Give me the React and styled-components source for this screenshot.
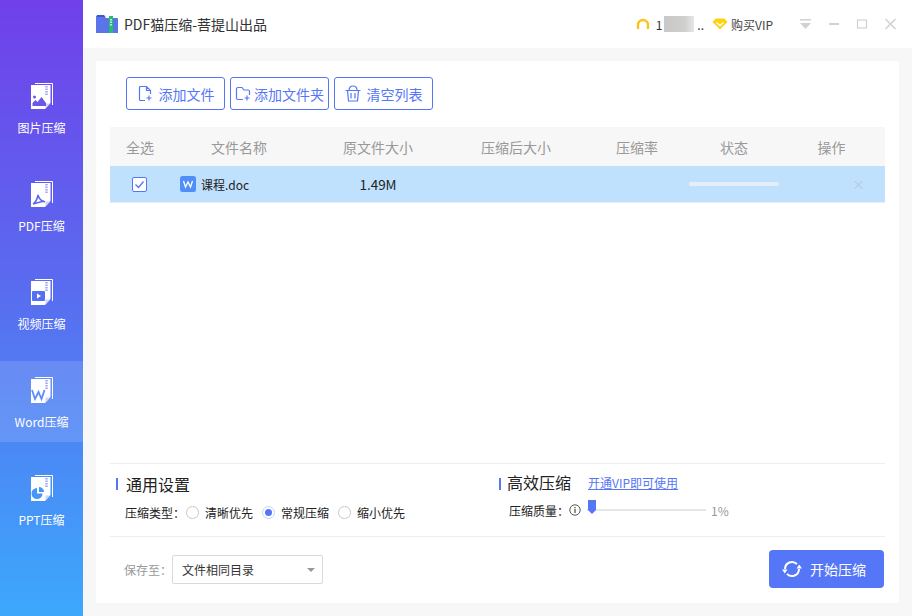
import React from 'react'
import styled, { createGlobalStyle } from 'styled-components'

const Global = createGlobalStyle`
  html, body, #root { margin: 0; padding: 0; width: 100%; height: 100%; }
  body {
    font-family: "Noto Sans CJK SC", "Liberation Sans", sans-serif;
    overflow: hidden;
    background: #f7f7f7;
  }
  * { box-sizing: border-box; }
`

const Shell = styled.div`
  display: flex;
  width: 912px;
  height: 616px;
`

const Sidebar = styled.nav`
  width: 83px;
  flex: none;
  padding-top: 67px;
  display: flex;
  flex-direction: column;
  gap: 17px;
  background: linear-gradient(180deg, #7040ea 0%, #5a6aef 45%, #3ca8fc 100%);
`

const NavItem = styled.div`
  height: 81px;
  padding-top: 16px;
  display: flex;
  flex-direction: column;
  align-items: center;
  gap: 10px;
  color: #fff;
  font-size: 12px;
  line-height: 18px;
  background: ${p => (p.$active ? 'rgba(255,255,255,.13)' : 'transparent')};
`

const Main = styled.div`
  flex: 1;
  display: flex;
  flex-direction: column;
  min-width: 0;
`

const TitleBar = styled.header`
  height: 48px;
  flex: none;
  background: #fff;
  display: flex;
  align-items: center;
  padding: 0 15px 0 13px;
`

const AppTitle = styled.div`
  margin-left: 6px;
  font-size: 14px;
  color: #333;
  flex: 1;
`

const User = styled.div`
  display: flex;
  align-items: center;
  font-size: 12px;
  color: #333;
`

const Blurred = styled.span`
  width: 30px;
  height: 16px;
  margin: 0 3px 0 2px;
  background: linear-gradient(90deg, #c8c8c8, #d0d0ce 70%, #e6e6e6);
  filter: blur(.5px);
`

const VipText = styled.span`
  margin-left: 3px;
  font-size: 12px;
  color: #444;
`

const Controls = styled.div`
  display: flex;
  align-items: center;
  gap: 16px;
  margin-left: 26px;
`

const Body = styled.div`
  flex: 1;
  padding: 13px;
  min-height: 0;
`

const Card = styled.main`
  height: 100%;
  background: #fff;
  padding: 0 14px;
  display: flex;
  flex-direction: column;
`

const Toolbar = styled.div`
  display: flex;
  gap: 5px;
  padding: 16px 0 17px 16px;
`

const ToolButton = styled.button`
  width: 99px;
  height: 33px;
  background: #fff;
  border: 1px solid #5576f7;
  border-radius: 3px;
  color: #5576f7;
  font: inherit;
  font-size: 14px;
  padding: 0;
  display: flex;
  align-items: center;
  justify-content: center;
  gap: ${p => p.$gap}px;
`

const Row = styled.div`
  display: grid;
  grid-template-columns: 60px 138px 140px 136px 106px 88px 107px;
  align-items: center;
  justify-items: center;
  font-size: 14px;
`

const HeaderRow = styled(Row)`
  height: 39px;
  background: #f7f7f7;
  color: #999;
`

const FileRow = styled(Row)`
  height: 37px;
  background: #bfe1fd;
  border-bottom: 1px solid #e8eef4;
  color: #222;
`

const Check = styled.svg`
  margin-right: 2px;
`

const FileName = styled.div`
  justify-self: start;
  margin-left: 10px;
  display: flex;
  align-items: center;
  gap: 5px;
  font-size: 12px;
`

const Size = styled.span`
  font-size: 13.5px;
`

const Progress = styled.div`
  width: 90px;
  height: 4px;
  border-radius: 2px;
  background: #e3eef7;
`

const Remove = styled.span`
  margin: 0 0 2px 54px;
  color: #b3c9da;
  font-size: 13px;
  line-height: 1;
`

const Spacer = styled.div`
  flex: 1;
`

const Settings = styled.section`
  height: 74px;
  flex: none;
  border-top: 1px solid #eee;
  border-bottom: 1px solid #eee;
  display: grid;
  grid-template-columns: 383px 1fr;
  padding: 11px 0 0 6px;
`

const Heading = styled.div`
  display: flex;
  align-items: center;
  height: 18px;
  font-size: 16px;
  color: #222;
`

const Mark = styled.i`
  width: 2px;
  height: 12px;
  background: #5576f7;
  margin-right: ${p => p.$gap}px;
`

const Lifted = styled.span`
  margin-bottom: 4px;
`

const VipLink = styled.a`
  margin: 0 0 4px 17px;
  font-size: 12px;
  color: #5576f7;
  text-decoration: underline;
`

const OptionRow = styled.div`
  display: flex;
  align-items: center;
  height: 16px;
  margin-top: ${p => p.$top}px;
  padding-left: ${p => p.$indent}px;
  font-size: 12px;
  color: #222;
`

const Radio = styled.span`
  width: 13px;
  height: 13px;
  border-radius: 50%;
  border: 1px solid ${p => (p.$on ? '#c8d2f5' : '#c9c9c9')};
  margin-left: ${p => (p.$first ? 1 : 9)}px;
  margin-right: 6px;
  display: flex;
  align-items: center;
  justify-content: center;
  &::after {
    content: '';
    width: 7px;
    height: 7px;
    border-radius: 50%;
    background: ${p => (p.$on ? '#5576f7' : 'transparent')};
  }
`

const Slider = styled.div`
  position: relative;
  width: 119px;
  height: 2px;
  margin-left: 6px;
  background: #e6e6e6;
`

const Thumb = styled.svg`
  position: absolute;
  left: 0;
  top: -9px;
`

const Percent = styled.span`
  margin-left: 5px;
  color: #999;
`

const Footer = styled.footer`
  height: 66px;
  flex: none;
  display: flex;
  align-items: center;
  padding: 0 1px 2px 14px;
  color: #999;
  font-size: 12px;
`

const SelectBox = styled.div`
  width: 151px;
  height: 29px;
  border: 1px solid #d9d9d9;
  border-radius: 2px;
  display: flex;
  align-items: center;
  justify-content: space-between;
  padding: 0 7px 0 9px;
  color: #333;
`

const Caret = styled.i`
  width: 0;
  height: 0;
  border-left: 4px solid transparent;
  border-right: 4px solid transparent;
  border-top: 4px solid #999;
  margin-top: 2px;
`

const StartButton = styled.button`
  margin-left: auto;
  width: 115px;
  height: 38px;
  border: 0;
  border-radius: 4px;
  background: #5576f7;
  color: #fff;
  font: inherit;
  font-size: 14px;
  display: flex;
  align-items: center;
  gap: 8px;
  padding: 0 0 0 13px;
`

const SideIcon = ({ children }) => (
  <svg width="22" height="26" viewBox="0 0 22 26">
    <path d="M4 .5H21.5V22" fill="none" stroke="#fff" strokeWidth="1" />
    <path d="M0 2H19.5V20L14 26H0Z" fill="#fff" />
    <path d="M14.5 25.5V20.5H19Z" fill="#cfd6fa" />
    <path d="M15.5 3v10" stroke="#a3a8f2" strokeWidth="2.5" strokeDasharray="1.5 1" />
    {children}
  </svg>
)

const navItems = [
  {
    label: '图片压缩',
    glyph: <path d="M1.5 23v-3l3-3 2 2 4-5 4.5 6v3ZM2 14a1.5 1.5 0 1 0 3 0a1.5 1.5 0 1 0-3 0" fill="#6a56ec" />,
  },
  {
    label: 'PDF压缩',
    glyph: <path d="M2 23c2-1 4-4 5-9c1 4 3 6 7 7M2 23l11-3" fill="none" stroke="#5e66ef" strokeWidth="1.5" />,
  },
  {
    label: '视频压缩',
    glyph: (
      <>
        <rect x="1" y="12" width="13" height="10" rx="1" fill="#5570f0" />
        <path d="M6 14.5v5l4-2.5Z" fill="#fff" />
      </>
    ),
  },
  {
    label: 'Word压缩',
    active: true,
    glyph: <path d="M1 13l3 9 3.5-7 3 7 3-9" fill="none" stroke="#5f8bf5" strokeWidth="1.8" />,
  },
  {
    label: 'PPT压缩',
    glyph: (
      <>
        <path d="M6 13a5.5 5.5 0 1 0 5.5 5.5H6Z" fill="#4596f8" />
        <path d="M8 12a5 5 0 0 1 5 5H8Z" fill="#4596f8" />
      </>
    ),
  },
]

const columns = ['全选', '文件名称', '原文件大小', '压缩后大小', '压缩率', '状态', '操作']

const AddFileIcon = () => (
  <svg width="16" height="17" viewBox="0 0 16 17" fill="none" stroke="#5576f7" strokeWidth="1.2">
    <path d="M8 15.5H3.5a1 1 0 0 1-1-1V2.5a1 1 0 0 1 1-1H9.5L13.5 5.5V9M9.5 1.5V5.5H13.5M12 10.5v5M9.5 13h5" />
  </svg>
)

const AddFolderIcon = () => (
  <svg width="16" height="15" viewBox="0 0 16 15" fill="none" stroke="#5576f7" strokeWidth="1.2">
    <path d="M8 13.5H3a1.5 1.5 0 0 1-1.5-1.5V3A1.5 1.5 0 0 1 3 1.5H7L9 4H13a1.5 1.5 0 0 1 1.5 1.5V9M12 9.5v5M9.5 12h5" />
  </svg>
)

const TrashIcon = () => (
  <svg width="16" height="17" viewBox="0 0 16 17" fill="none" stroke="#5576f7" strokeWidth="1.2">
    <path d="M.5 5.5H15.5M4 5.5C4 2 6 1 8 1S12 2 12 5.5M2.5 5.5L3.5 16H12.5L13.5 5.5M6 8v5.5M10 8v5.5" />
  </svg>
)

const RefreshIcon = () => (
  <svg width="20" height="18" viewBox="0 0 20 18" fill="none">
    <path d="M3 9a7 7 0 0 1 12-4.9M17 9a7 7 0 0 1-12 4.9" stroke="#fff" strokeWidth="2" />
    <path d="M20 8.5H14.5L17.2 4.5ZM0 9.5H5.5L2.8 13.5Z" fill="#fff" />
  </svg>
)

export default function App() {
  return (
    <Shell>
      <Global />
      <Sidebar>
        {navItems.map(item => (
          <NavItem key={item.label} $active={item.active}>
            <SideIcon>{item.glyph}</SideIcon>
            {item.label}
          </NavItem>
        ))}
      </Sidebar>
      <Main>
        <TitleBar>
          <svg width="22" height="20" viewBox="0 0 22 20">
            <path d="M0 2.5A1 1 0 0 1 1 1.5H8L10 4H21A1 1 0 0 1 22 5V19H0Z" fill="#5b74ea" />
            <path d="M1 1h7l1.5 2H1Z" fill="#3f58c9" />
            <rect x="13" y="2" width="4" height="17" fill="#22bf73" />
            <path d="M15 5v7" stroke="#fff" strokeWidth="1.4" strokeDasharray="1.5 1" />
          </svg>
          <AppTitle>PDF猫压缩-菩提山出品</AppTitle>
          <User>
            <svg width="14" height="12" viewBox="0 0 14 12" fill="none" style={{ marginRight: 6 }}>
              <path d="M2 11V7a5 5 0 0 1 10 0v4" stroke="#fcc419" strokeWidth="2.4" />
            </svg>
            1
            <Blurred />
            ..
          </User>
          <svg width="16" height="12" viewBox="0 0 16 12" style={{ marginLeft: 8 }}>
            <path d="M3.5 .5H12.5L15.5 4L8 11.5L.5 4Z" fill="#fcd214" />
            <path d="M4.5 4.5L8 7.5L11.5 4.5" fill="none" stroke="#fff" strokeWidth="1.4" />
          </svg>
          <VipText>购买VIP</VipText>
          <Controls>
            <svg width="13" height="12" viewBox="0 0 13 12" fill="#d2d2d2">
              <path d="M1 1h11v1.5H1ZM1 5h11L6.5 11Z" />
            </svg>
            <svg width="12" height="12" viewBox="0 0 12 12" fill="#d2d2d2">
              <rect x="1" y="5" width="10" height="2" />
            </svg>
            <svg width="12" height="12" viewBox="0 0 12 12" fill="none" stroke="#d2d2d2" strokeWidth="1.2">
              <rect x="1.5" y="2" width="9" height="8" />
            </svg>
            <svg width="13" height="12" viewBox="0 0 13 12" fill="none" stroke="#d2d2d2" strokeWidth="1.6">
              <path d="M1.5 1l10 10M11.5 1l-10 10" />
            </svg>
          </Controls>
        </TitleBar>
        <Body>
          <Card>
            <Toolbar>
              <ToolButton $gap={6}><AddFileIcon />添加文件</ToolButton>
              <ToolButton $gap={3}><AddFolderIcon />添加文件夹</ToolButton>
              <ToolButton $gap={6}><TrashIcon />清空列表</ToolButton>
            </Toolbar>
            <HeaderRow>
              {columns.map(c => <span key={c}>{c}</span>)}
            </HeaderRow>
            <FileRow>
              <Check width="15" height="15" viewBox="0 0 15 15" fill="none">
                <rect x=".5" y=".5" width="14" height="14" rx="1.5" fill="#fff" stroke="#5576f7" />
                <path d="M3.5 7.5L6.5 10.5L11.5 4.5" stroke="#5576f7" strokeWidth="1.3" />
              </Check>
              <FileName>
                <svg width="16" height="16" viewBox="0 0 16 16" fill="none">
                  <rect width="16" height="16" rx="2.5" fill="#4f8ff7" />
                  <path d="M3.5 5l2 6 2.5-5 2.5 5 2-6" stroke="#fff" strokeWidth="1.3" />
                </svg>
                课程.doc
              </FileName>
              <Size>1.49M</Size>
              <span />
              <span />
              <Progress />
              <Remove>×</Remove>
            </FileRow>
            <Spacer />
            <Settings>
              <div>
                <Heading><Mark $gap={8} />通用设置</Heading>
                <OptionRow $indent={9} $top={11}>
                  压缩类型：
                  <Radio $first />清晰优先
                  <Radio $on />常规压缩
                  <Radio />缩小优先
                </OptionRow>
              </div>
              <div>
                <Heading>
                  <Mark $gap={6} />
                  <Lifted>高效压缩</Lifted>
                  <VipLink>开通VIP即可使用</VipLink>
                </Heading>
                <OptionRow $indent={10} $top={9}>
                  压缩质量：
                  <svg width="12" height="12" viewBox="0 0 12 12" fill="none">
                    <circle cx="6" cy="6" r="5.2" stroke="#555" />
                    <path d="M6 5v4M6 3v1.2" stroke="#555" strokeWidth="1.3" />
                  </svg>
                  <Slider>
                    <Thumb width="10" height="15" viewBox="0 0 10 15">
                      <path d="M1 0H9V10L5 14L1 10Z" fill="#5576f7" />
                    </Thumb>
                  </Slider>
                  <Percent>1%</Percent>
                </OptionRow>
              </div>
            </Settings>
            <Footer>
              保存至：
              <SelectBox>文件相同目录<Caret /></SelectBox>
              <StartButton><RefreshIcon />开始压缩</StartButton>
            </Footer>
          </Card>
        </Body>
      </Main>
    </Shell>
  )
}
